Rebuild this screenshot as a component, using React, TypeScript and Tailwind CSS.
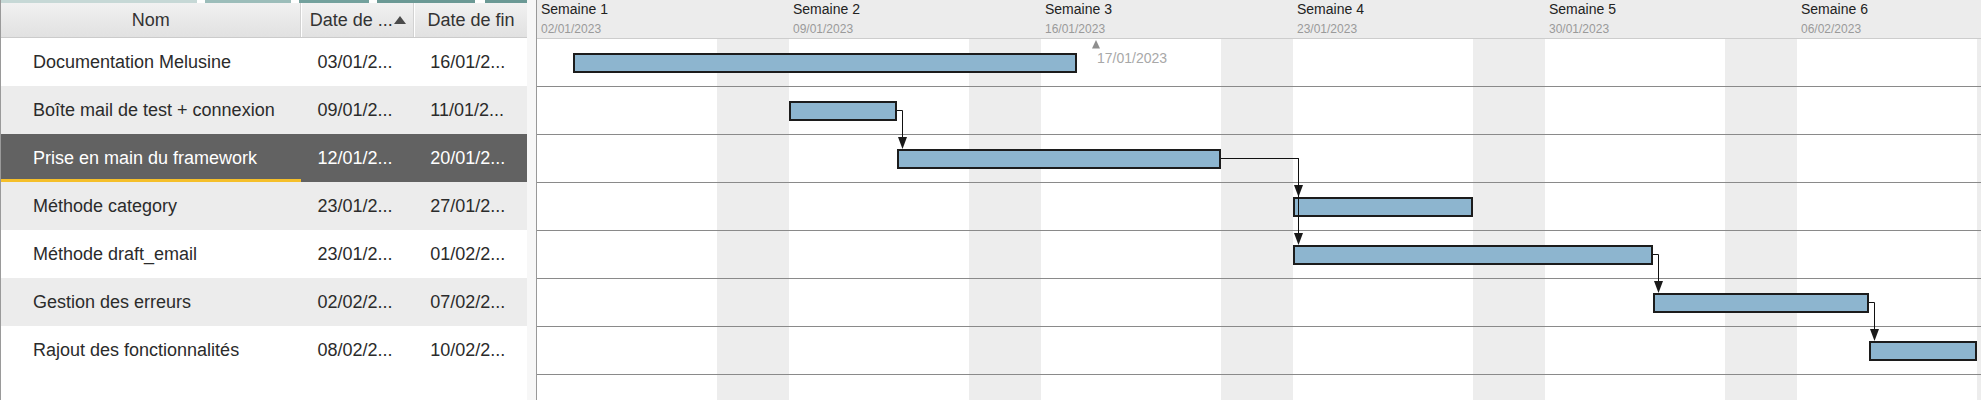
import React from "react";

type Task = {
  name: string;
  start: string;
  end: string;
  s: number; // first day index from 02/01/2023
  e: number; // last day index
};

const DAY = 36;
const WEEK = DAY * 7;
const HEADER_H = 39;
const ROW_H = 48;

const tasks: Task[] = [
  { name: "Documentation Melusine", start: "03/01/2...", end: "16/01/2...", s: 1, e: 14 },
  { name: "Boîte mail de test + connexion", start: "09/01/2...", end: "11/01/2...", s: 7, e: 9 },
  { name: "Prise en main du framework", start: "12/01/2...", end: "20/01/2...", s: 10, e: 18 },
  { name: "Méthode category", start: "23/01/2...", end: "27/01/2...", s: 21, e: 25 },
  { name: "Méthode draft_email", start: "23/01/2...", end: "01/02/2...", s: 21, e: 30 },
  { name: "Gestion des erreurs", start: "02/02/2...", end: "07/02/2...", s: 31, e: 36 },
  { name: "Rajout des fonctionnalités", start: "08/02/2...", end: "10/02/2...", s: 37, e: 39 },
];

const deps: [number, number][] = [
  [1, 2],
  [2, 3],
  [2, 4],
  [4, 5],
  [5, 6],
];

const weeks = [
  { label: "Semaine 1", date: "02/01/2023" },
  { label: "Semaine 2", date: "09/01/2023" },
  { label: "Semaine 3", date: "16/01/2023" },
  { label: "Semaine 4", date: "23/01/2023" },
  { label: "Semaine 5", date: "30/01/2023" },
  { label: "Semaine 6", date: "06/02/2023" },
];

const SELECTED = 2;

const TaskTable: React.FC = () => (
  <div className="flex w-[527px] shrink-0 flex-col border-l border-[#9a9a9a]">
    {/* strip from the window above */}
    <div className="flex h-[3px] w-full">
      <div className="w-[196px] bg-[#c6d8d6]" />
      <div className="w-[8px] bg-white" />
      <div className="w-[86px] bg-[#9cbdba]" />
      <div className="w-[8px] bg-white" />
      <div className="w-[70px] bg-[#73a19d]" />
      <div className="w-[8px] bg-white" />
      <div className="w-[98px] bg-[#6b9995]" />
      <div className="w-[10px] bg-white" />
      <div className="flex-1 bg-[#6b9995]" />
    </div>

    <div className="flex h-[35px] border-b border-[#cbcbcb] bg-gradient-to-b from-[#f1f1f1] to-[#e1e1e1] text-[18px] text-[#333]">
      <div className="flex w-[301px] items-center justify-center border-r border-[#d2d2d2]">
        Nom
      </div>
      <div className="flex w-[113px] items-center justify-center border-r border-[#d2d2d2] border-l border-l-white">
        <span>Date de ...</span>
        <svg width="12" height="9" viewBox="0 0 12 9" className="ml-[1px]">
          <polygon points="6,0 12,8 0,8" fill="#4a4a4a" />
        </svg>
      </div>
      <div className="flex w-[113px] items-center justify-center border-l border-white">
        Date de fin
      </div>
    </div>

    {tasks.map((t, i) => {
      const selected = i === SELECTED;
      const rowCls = selected
        ? "bg-[#626262] text-white"
        : i % 2 === 1
        ? "bg-[#ececec] text-[#2b2b2b]"
        : "bg-white text-[#2b2b2b]";
      return (
        <div key={t.name} className={`flex h-[48px] text-[18px] ${rowCls}`}>
          <div
            className={`flex w-[301px] items-center pl-[32px] ${
              selected ? "shadow-[inset_0_-3px_0_#f5bf2a]" : ""
            }`}
          >
            {t.name}
          </div>
          <div className="flex w-[113px] items-center pl-[16px]">{t.start}</div>
          <div className="flex w-[113px] items-center pl-[16px]">{t.end}</div>
        </div>
      );
    })}
  </div>
);

const Gantt: React.FC = () => {
  const rowTop = (i: number) => HEADER_H + i * ROW_H;
  const barTop = (i: number) => rowTop(i) + 14;

  return (
    <div className="relative flex min-w-0 flex-1 flex-col overflow-hidden border-l border-[#999]">
      <div className="flex h-[39px] shrink-0 border-b border-[#cdcdcd] bg-[#ececec]">
        {weeks.map((w) => (
          <div key={w.label} className="w-[252px] shrink-0 pl-[4px]">
            <div className="mt-[1px] text-[14px] leading-[16px] text-[#222]">{w.label}</div>
            <div className="mt-[5px] text-[12px] leading-[14px] text-[#9a9a9a]">{w.date}</div>
          </div>
        ))}
      </div>

      <div className="relative flex-1">
        {/* working days / weekends */}
        <div className="flex h-full">
          {weeks.map((w) => (
            <div key={w.label} className="flex w-[252px] shrink-0">
              <div className="w-[180px] bg-white" />
              <div className="w-[72px] bg-[#ededed]" />
            </div>
          ))}
        </div>

        <div className="absolute inset-0">
          {tasks.map((t) => (
            <div key={t.name} className="relative h-[48px] border-b border-[#8a8a8a]">
              <div
                className="absolute top-[14px] h-[20px] border-2 border-[#1c1c1c] bg-[#8db5cf]"
                style={{ left: t.s * DAY, width: (t.e - t.s + 1) * DAY }}
              />
            </div>
          ))}
        </div>
      </div>

      {/* dependencies and milestone */}
      <svg className="pointer-events-none absolute left-0 top-0" width="1444" height="400">
        {deps.map(([a, b]) => {
          const fromX = (tasks[a].e + 1) * DAY;
          const x = Math.max(fromX, tasks[b].s * DAY) + 5.5;
          const y = rowTop(a) + 23.5;
          const tip = barTop(b);
          return (
            <g key={`${a}-${b}`}>
              <polyline
                points={`${fromX},${y} ${x},${y} ${x},${tip - 10}`}
                fill="none"
                stroke="#111"
                strokeWidth="1"
              />
              <polygon
                points={`${x - 4.5},${tip - 12} ${x + 4.5},${tip - 12} ${x},${tip}`}
                fill="#1a1a1a"
              />
            </g>
          );
        })}
        <polygon points="559,40 555,48.5 563,48.5" fill="#8e8e8e" />
      </svg>
      <div className="absolute left-[560px] top-[50px] text-[14px] leading-[16px] text-[#a8a8a8]">
        17/01/2023
      </div>
    </div>
  );
};

const App: React.FC = () => {
  return (
    <div className="flex h-[400px] w-[1981px] overflow-hidden bg-white font-['Liberation_Sans',Arial,sans-serif]">
      <TaskTable />
      <div className="w-[9px] shrink-0 bg-[#f7f7f7]" />
      <Gantt />
    </div>
  );
};

export default App;
